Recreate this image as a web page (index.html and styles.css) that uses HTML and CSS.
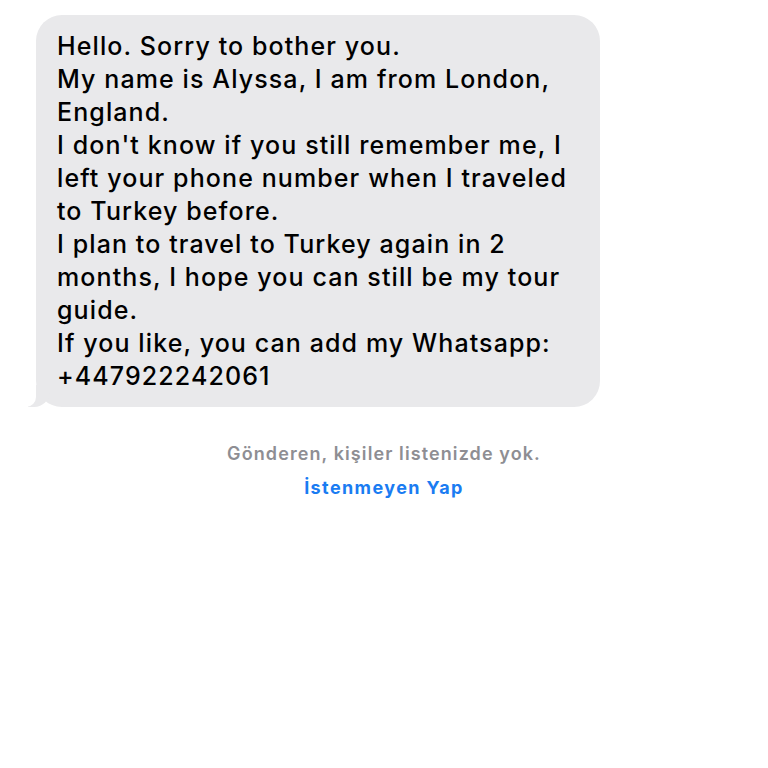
FILE: index.html
```html
<!DOCTYPE html>
<html>
	<head>
		<meta charset="UTF-8">
		<title>Mesaj</title>
		<link rel="stylesheet" href="styles.css">
	</head>
	<body>
		<div class="chat">
			<div class="bubble">
				Hello. Sorry to bother you.<br>
				My name is Alyssa, I am from London,<br>
				England.<br>
				I don't know if you still remember me, I<br>
				left your phone number when I traveled<br>
				to Turkey before.<br>
				I plan to travel to Turkey again in 2<br>
				months, I hope you can still be my tour<br>
				guide.<br>
				If you like, you can add my Whatsapp:<br>
				+447922242061
			</div>
			<p class="note">Gönderen, kişiler listenizde yok.</p>
			<p class="junk">İstenmeyen Yap</p>
		</div>
	</body>
</html>
```

FILE: styles.css
```css
body{
	margin:0;
	background:#fff;
	font-family:Inter,"Noto Sans","Liberation Sans",sans-serif;
}
.chat{
	width:768px;
	padding-top:15px;
}
.bubble{
	position:relative;
	box-sizing:border-box;
	width:564px;
	margin-left:36px;
	padding:15px 10px 14px 21px;
	background:#e9e9eb;
	border-radius:26px;
	color:#000;
	font-size:25px;
	font-weight:500;
	letter-spacing:1.1px;
	line-height:33px;
	white-space:nowrap;
}
/* tail */
.bubble:before{
	content:"";
	position:absolute;
	left:-8px;
	bottom:0;
	width:22px;
	height:22px;
	background:#e9e9eb;
	border-bottom-right-radius:16px;
}
.bubble:after{
	content:"";
	position:absolute;
	left:-14px;
	bottom:0;
	width:14px;
	height:24px;
	background:#fff;
	border-bottom-right-radius:10px;
}
.note{
	margin:36px 0 0;
	text-align:center;
	color:#8e8e93;
	font-size:18px;
	font-weight:600;
	letter-spacing:1.1px;
}
.junk{
	margin:13px 0 0;
	text-align:center;
	color:#1a7cf2;
	font-size:18px;
	font-weight:700;
	letter-spacing:1.4px;
}
```
